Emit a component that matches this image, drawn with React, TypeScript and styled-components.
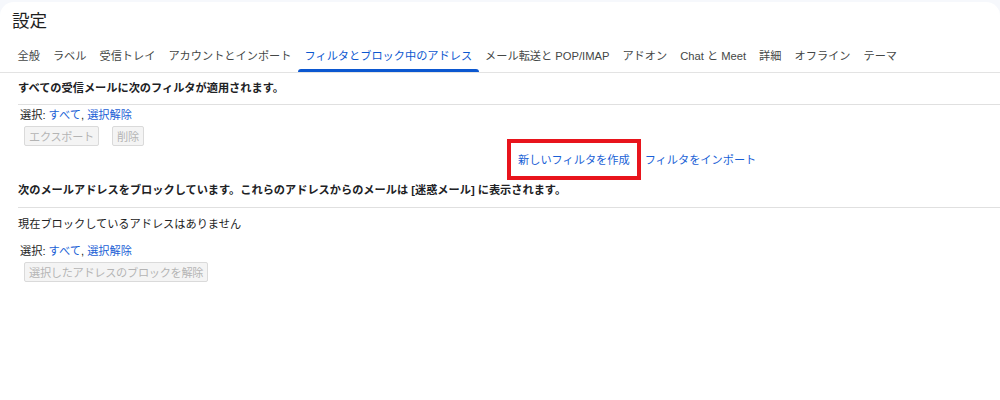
import React from "react";
import styled, { createGlobalStyle } from "styled-components";

const Global = createGlobalStyle`
  html, body { margin: 0; padding: 0; }
  body {
    background: #f6f8fc;
    font-family: "Liberation Sans", "Noto Sans CJK JP", sans-serif;
    font-size: 11.2px;
    color: #202124;
  }
`;

const Card = styled.div`
  margin-top: 2px;
  min-height: 398px;
  background: #ffffff;
  border-radius: 14px 14px 0 0;
`;

const Title = styled.h1`
  margin: 0;
  padding: 7px 12px 0;
  font-size: 17.6px;
  font-weight: 400;
  line-height: 24px;
  color: #1f1f1f;
`;

const Tabs = styled.nav`
  display: flex;
  margin-top: 7px;
  padding-left: 11px;
  border-bottom: 1px solid #e3e3e3;
`;

const Tab = styled.div<{ $active?: boolean }>`
  position: relative;
  height: 32px;
  line-height: 32px;
  padding: 0 6.5px;
  white-space: nowrap;
  color: ${(p) => (p.$active ? "#0b57d0" : "#444746")};
  &::after {
    content: "";
    display: ${(p) => (p.$active ? "block" : "none")};
    position: absolute;
    left: 0;
    right: 0;
    bottom: 0;
    height: 3px;
    border-radius: 3px 3px 0 0;
    background: #0b57d0;
  }
`;

const Section = styled.section`
  margin-left: 18px;
`;

const Heading = styled.div<{ $top: number; $bottom: number }>`
  margin-top: ${(p) => p.$top}px;
  padding-bottom: ${(p) => p.$bottom}px;
  line-height: 16px;
  font-weight: 700;
  color: #202124;
  border-bottom: 1px solid #e0e0e0;
`;

const Line = styled.div<{ $top: number; $indent?: number }>`
  margin-top: ${(p) => p.$top}px;
  padding-left: ${(p) => p.$indent ?? 0}px;
  line-height: 16px;
  color: #222;
`;

const Link = styled.span`
  color: #1a5fd6;
  cursor: pointer;
`;

const ButtonRow = styled.div`
  display: flex;
  gap: 13px;
  margin-top: 3px;
  padding-left: 6px;
`;

const Button = styled.button`
  height: 20px;
  padding: 0 4px;
  font-family: inherit;
  font-size: 11.2px;
  letter-spacing: -0.3px;
  color: #b4b4b4;
  background: #f4f4f4;
  border: 1px solid #dadada;
  border-radius: 2px;
`;

const LinkRow = styled.div`
  display: flex;
  gap: 15px;
  margin-top: 6px;
  padding-left: 500px;
  line-height: 16px;
`;

const Highlighted = styled.span`
  position: relative;
`;

const RedBox = styled.span`
  position: absolute;
  top: -13px;
  bottom: -12px;
  left: -11px;
  right: -11px;
  border: 4px solid #e8141c;
  pointer-events: none;
`;

const tabs = [
  "全般",
  "ラベル",
  "受信トレイ",
  "アカウントとインポート",
  "フィルタとブロック中のアドレス",
  "メール転送と POP/IMAP",
  "アドオン",
  "Chat と Meet",
  "詳細",
  "オフライン",
  "テーマ",
];

function SelectLine({ top }: { top: number }) {
  return (
    <Line $top={top} $indent={2}>
      選択: <Link>すべて</Link>, <Link>選択解除</Link>
    </Line>
  );
}

export default function App() {
  return (
    <>
      <Global />
      <Card>
        <Title>設定</Title>
        <Tabs>
          {tabs.map((t) => (
            <Tab key={t} $active={t === "フィルタとブロック中のアドレス"}>
              {t}
            </Tab>
          ))}
        </Tabs>
        <Section>
          <Heading $top={7} $bottom={8}>
            すべての受信メールに次のフィルタが適用されます。
          </Heading>
          <SelectLine top={2} />
          <ButtonRow>
            <Button disabled>エクスポート</Button>
            <Button disabled>削除</Button>
          </ButtonRow>
          <LinkRow>
            <Highlighted>
              <Link>新しいフィルタを作成</Link>
              <RedBox />
            </Highlighted>
            <Link>フィルタをインポート</Link>
          </LinkRow>
          <Heading $top={14} $bottom={9}>
            次のメールアドレスをブロックしています。これらのアドレスからのメールは [迷惑メール] に表示されます。
          </Heading>
          <Line $top={8}>現在ブロックしているアドレスはありません</Line>
          <SelectLine top={11} />
          <ButtonRow>
            <Button disabled>選択したアドレスのブロックを解除</Button>
          </ButtonRow>
        </Section>
      </Card>
    </>
  );
}
